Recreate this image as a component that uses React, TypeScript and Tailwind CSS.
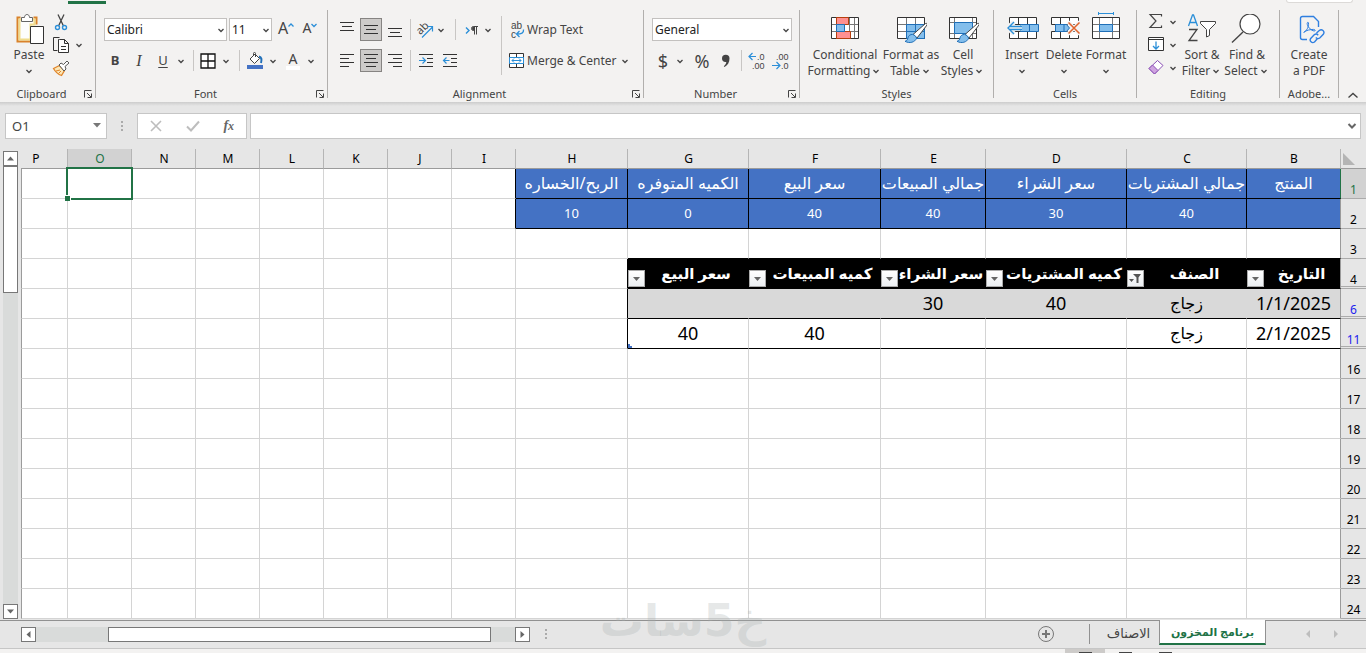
import type { ReactNode } from 'react';

const COLUMNS = ['P', 'O', 'N', 'M', 'L', 'K', 'J', 'I', 'H', 'G', 'F', 'E', 'D', 'C', 'B'];
const ROWS = [1, 2, 3, 4, 6, 11, 16, 17, 18, 19, 20, 21, 22, 23, 24];

const CELLS: Record<string, string> = {
  H1: 'الربح/الخساره', G1: 'الكميه المتوفره', F1: 'سعر البيع', E1: 'جمالي المبيعات',
  D1: 'سعر الشراء', C1: 'جمالي المشتريات', B1: 'المنتج',
  H2: '10', G2: '0', F2: '40', E2: '40', D2: '30', C2: '40',
  G4: 'سعر البيع', F4: 'كميه المبيعات', E4: 'سعر الشراء', D4: 'كميه المشتريات', C4: 'الصنف', B4: 'التاريخ',
  E6: '30', D6: '40', C6: 'زجاج', B6: '1/1/2025',
  G11: '40', F11: '40', C11: 'زجاج', B11: '2/1/2025',
};

/* ---------- small pieces ---------- */

const Chevron = () => (
  <svg width="12" height="12" viewBox="0 0 12 12" fill="none" stroke="#444" strokeWidth="1.300" className="shrink-0">
    <path d="M3.5 5 6 7.5 8.5 5" />
  </svg>
);

const Sep = ({ className = 'h-[21px]' }: { className?: string }) => (
  <span className={`w-px shrink-0 bg-[#c8c6c4] ${className}`} />
);

const Tool = ({ label, children, active, className = 'w-[22px]' }: { label: string; children: ReactNode; active?: boolean; className?: string }) => (
  <button
    aria-label={label}
    className={`flex h-[23px] shrink-0 items-center justify-center ${className} ${active ? 'border border-[#868482] bg-[#cdcbc9]' : ''}`}
  >
    {children}
  </button>
);

const BigTool = ({ lines, icon, arrow, className }: { lines: string[]; icon: ReactNode; arrow?: boolean; className: string }) => (
  <button className={`flex shrink-0 flex-col items-center pt-1 ${className}`}>
    <svg width="32" height="33" viewBox="0 0 32 33" fill="none" className="shrink-0">{icon}</svg>
    <span className="h-4 whitespace-nowrap leading-4">{lines[0]}</span>
    <span className="flex h-4 items-center whitespace-nowrap leading-4">
      {lines[1]}
      {arrow && <Chevron />}
    </span>
  </button>
);

const Group = ({ title, launcher, className, children }: { title: string; launcher?: boolean; className: string; children: ReactNode }) => (
  <>
    <section className={`flex h-[92px] shrink-0 flex-col ${className}`}>
      <div className="flex h-[76px]">{children}</div>
      <div className="flex h-4 items-center text-[11px] leading-4">
        <span className="flex-1 text-center">{title}</span>
        {launcher && (
          <button aria-label={`${title} settings`} className="mr-[2px]">
            <svg width="10" height="10" viewBox="0 0 10 10" fill="none" stroke="#444">
              <path d="M1.5 8.5v-7h7M4 4l4 4M8.5 4.5v4h-4" />
            </svg>
          </button>
        )}
      </div>
    </section>
    <span className="h-[88px] w-px shrink-0 bg-[#b1afad]" />
  </>
);

const Combo = ({ label, value, className }: { label: string; value: string; className: string }) => (
  <span className={`relative block h-[23px] shrink-0 ${className}`}>
    <select aria-label={label} className="size-full appearance-none border border-[#c3c1bf] bg-white pl-[2px] text-xs text-[#222]">
      <option>{value}</option>
    </select>
    <span className="pointer-events-none absolute top-[6px] right-0">
      <Chevron />
    </span>
  </span>
);

/* ---------- ribbon drawings ---------- */

const Lines = ({ d }: { d: string }) => (
  <svg width="16" height="16" viewBox="0 0 16 16" fill="none" stroke="#333" className="shrink-0">
    <path d={d} />
  </svg>
);

const Brush = () => (
  <g>
    <path d="M30.5 9.5c1.500-.5 2 .5 1.500 1.500L22 24l-4-3.500z" fill="#fff" stroke="#444" />
    <path d="M17.500 20.500c2 .3 3.800 1.800 4 3.800-1.500 4-7 5.500-11.500 3 2-.5 2.500-1.500 3-3.500.5-2.300 2.500-3.500 4.500-3.300z" fill="#83beec" stroke="#1f6fb8" />
  </g>
);

const pasteIcon = (
  <>
    <path d="M6.500 3.500h-3v24h14M19.500 3.500h3v7" stroke="#d9822b" strokeWidth="2" />
    <path d="M5.500 5.500v20h11v-15h4v-5z" fill="#fdfdfd" stroke="#f0dc8c" strokeWidth="2" />
    <path d="M7.500 7.500v-4h3c0-4 5-4 5 0h3v4z" fill="#fff" stroke="#666" />
    <path d="M16.500 12.500h13v17h-13z" fill="#fff" stroke="#333" />
  </>
);

const conditionalIcon = (
  <>
    <path d="M2.500 3.500h27v21h-27z" fill="#fff" />
    <path d="M2.500 10.500h27M2.500 17.500h27M7.500 3.500v21M20.500 3.500v21M25.500 3.500v21" stroke="#777" />
    <path d="M2.500 3.500h27v21h-27z" stroke="#333" />
    <path d="M7.500 3.500h12v7h-12zM7.500 17.500h14v7h-14z" fill="#ff9090" stroke="#b5400e" />
    <path d="M7.500 10.500h8v7h-8z" fill="#83beec" stroke="#1f6fb8" />
  </>
);

const formatTableIcon = (
  <>
    <path d="M2.500 3.500h27v21h-27z" fill="#fff" />
    <path d="M11.500 10.500h18v14h-18z" fill="#83beec" />
    <path d="M2.500 10.500h27M2.500 17.500h9M11.500 3.500v7M20.500 3.500v7" stroke="#777" />
    <path d="M2.500 3.500h27v21h-27z" stroke="#333" />
    <path d="M11.500 10.500h18v14h-18zM11.500 17.500h18M20.500 10.500v14" stroke="#1f6fb8" />
    <Brush />
  </>
);

const cellStylesIcon = (
  <>
    <path d="M2.500 3.500h27v21h-27z" fill="#fff" />
    <path d="M2.500 8.500h27M2.500 19.500h27M7.500 3.500v21M25.500 3.500v21" stroke="#777" />
    <path d="M2.500 3.500h27v21h-27z" stroke="#333" />
    <path d="M7.500 8.500h18v11h-18z" fill="#83beec" stroke="#1f6fb8" />
    <Brush />
  </>
);

const insertIcon = (
  <>
    <path d="M3.500 3.500h27v7h-27zM3.500 17.500h27v7h-27z" fill="#fff" stroke="#333" />
    <path d="M12.500 3.500v7M21.500 3.500v7M12.500 17.500v7M21.500 17.500v7" stroke="#333" />
    <path d="M14.500 10.500h18v7h-18zM23.500 10.500v7" fill="#83beec" stroke="#1f6fb8" />
    <path d="M8 8 2 14l6 6M3 14h13" stroke="#f3f2f1" strokeWidth="5" />
    <path d="M8 8 2 14l6 6M4 12.500h12M4 15.500h12" stroke="#2b8fd8" strokeWidth="1.400" />
  </>
);

const deleteIcon = (
  <>
    <path d="M3.500 3.500h27v7h-27zM3.500 17.500h27v7h-27z" fill="#fff" stroke="#333" />
    <path d="M12.500 3.500v7M21.500 3.500v7M12.500 17.500v7M21.500 17.500v7" stroke="#333" />
    <path d="M7.500 10.500h11l3 3.500-3 3.500h-11zM16 10.500v7" fill="#83beec" stroke="#1f6fb8" />
    <path d="m20 8 12 12M32 8 20 20" stroke="#f3f2f1" strokeWidth="4" />
    <path d="m20.500 8.500 11 11M31.500 8.500l-11 11" stroke="#e0632b" strokeWidth="1.500" />
  </>
);

const formatIcon = (
  <>
    <path d="M2.500 3.500h27v21h-27z" fill="#fff" />
    <path d="M2.500 10.500h27M2.500 17.500h27M9.500 3.500v21M22.500 3.500v21" stroke="#777" />
    <path d="M2.500 3.500h27v21h-27z" stroke="#333" />
    <path d="M9.500 10.500h13v7h-13z" fill="#83beec" stroke="#1f6fb8" />
    <path d="M8.500-2v3M23.500-2v3M8.500-.5h15" stroke="#2b8fd8" />
  </>
);

const sortFilterIcon = (
  <>
    <path d="m2.500 12 4-11h1l4 11M4 8.500h6" stroke="#2b8fd8" strokeWidth="1.300" />
    <path d="M3 15.500h8l-8 11h8.500" stroke="#444" strokeWidth="1.300" />
    <path d="M14.500 7.500h15v2l-6 6v6l-3 1.500v-7.500l-6-6z" fill="#fff" stroke="#444" />
  </>
);

const findIcon = (
  <>
    <circle cx="19" cy="10" r="10" fill="#fff" stroke="#444" strokeWidth="1.200" />
    <path d="M12 18 1 28.500" stroke="#444" strokeWidth="1.400" />
  </>
);

const pdfIcon = (
  <g stroke="#2f7fe0" strokeWidth="1.400">
    <path d="M14 25.500H9.500a2 2 0 0 1-2-2v-19a2 2 0 0 1 2-2h11l5 5V13" />
    <path d="M10.500 18.500c3-1 5.500-6 5-9.500-.3-1.500-1.800-.5-1.200 1.500.9 3 3.700 6 6.700 6.500 2 0 1.500-1.500-.5-1.600-3.500 0-7 1-9.500 2.600" strokeWidth="1" />
    <path d="m23.500 19 2.800-2.500c2.500-2 6 1 4 3.800l-3.300 3.500c-1.500 1.200-3.200.8-4.200-.3M24.500 24.500 21.500 28c-2.500 1.800-5.500-1.200-3.800-3.500l3.500-3.700c1.300-1 3-.8 4 .4" />
  </g>
);

/* ---------- ribbon ---------- */

const Ribbon = () => (
  <header className="shrink-0 bg-[#f3f2f1] text-xs text-[#444]">
    <div className="flex h-[10px] items-start">
      <span className="mt-px ml-[68px] h-[3px] w-[38px] bg-[#217346]" />
      <span className="mr-[13px] ml-auto h-[3px] w-[67px] rounded-b border border-t-0 border-[#dcdad8] bg-white" />
    </div>
    <div className="flex">
      <Group title="Clipboard" launcher className="w-[95px]">
        <div className="flex gap-1 pl-[11px]">
          <button className="flex w-9 flex-col items-center pt-1">
            <svg width="32" height="33" viewBox="-1 0 32 33" fill="none">{pasteIcon}</svg>
            <span className="leading-4">Paste</span>
            <span className="flex h-4 items-center"><Chevron /></span>
          </button>
          <div className="flex flex-col">
            <Tool label="Cut" className="w-5">
              <svg width="16" height="18" viewBox="0 0 16 18" fill="none">
                <path d="M5 1.500 10.500 13M11 1.500 5.500 13" stroke="#444" strokeWidth="1.300" />
                <circle cx="4.500" cy="14.500" r="2" stroke="#2b8fd8" strokeWidth="1.400" />
                <circle cx="11.500" cy="14.500" r="2" stroke="#2b8fd8" strokeWidth="1.400" />
              </svg>
            </Tool>
            <div className="flex items-center gap-0.5">
              <Tool label="Copy" className="w-5">
                <svg width="18" height="18" viewBox="0 0 18 18" fill="none" stroke="#333">
                  <path d="M7.500 1.500h-6v13h4" />
                  <path d="M7.500 3.500h5l4 4v9h-10v-13zM12.500 3.500v4h4M9 10.500h5M9 13.500h5" fill="#fff" />
                </svg>
              </Tool>
              <Chevron />
            </div>
            <Tool label="Format Painter" className="w-5">
              <svg width="18" height="18" viewBox="0 0 18 18" fill="none">
                <path d="m1.500 9.500 6-3 5 5-3 5c-3-1-6-3.500-8-7z" fill="#fbe7b8" stroke="#e0862b" strokeWidth="1.300" />
                <path d="m4 12 4-1M6.500 14.500 9 12" stroke="#e0862b" />
                <path d="m7 6 2-2 2.500 1.500L15 2l2 2-4 3.500L14 10l-2 2z" fill="#fff" stroke="#555" />
              </svg>
            </Tool>
          </div>
        </div>
      </Group>

      <Group title="Font" launcher className="w-[231px]">
        <div className="flex flex-col gap-2 pt-2">
          <div className="flex items-center pl-2">
            <Combo label="Font" value="Calibri" className="w-[123px]" />
            <Combo label="Font size" value="11" className="ml-[2px] w-[43px]" />
            <Tool label="Increase font size" className="ml-1 w-5 pb-1">
              <span className="text-base">A</span>
              <svg width="6" height="12" viewBox="0 0 6 12" fill="none" stroke="#2b8fd8" strokeWidth="1.300"><path d="M.5 4.500 3 2l2.500 2.500" /></svg>
            </Tool>
            <Tool label="Decrease font size" className="ml-1 w-5 pb-1">
              <span className="text-sm">A</span>
              <svg width="6" height="12" viewBox="0 0 6 12" fill="none" stroke="#2b8fd8" strokeWidth="1.300"><path d="M.5 2 3 4.500 5.500 2" /></svg>
            </Tool>
          </div>
          <div className="flex items-center pl-[7px]">
            <Tool label="Bold" className="w-6"><b className="text-[13px]">B</b></Tool>
            <Tool label="Italic" className="w-6"><i className="font-['Liberation_Serif',serif] text-base">I</i></Tool>
            <Tool label="Underline" className="w-6"><span className="text-[13px] underline underline-offset-2">U</span></Tool>
            <Chevron />
            <Sep className="mx-[6px] h-[21px]" />
            <Tool label="Borders" className="w-4">
              <svg width="16" height="16" viewBox="0 0 16 16" fill="#fff" stroke="#111" strokeWidth="1.300"><path d="M1 1h14v14H1zM8 1v14M1 8h14" /></svg>
            </Tool>
            <span className="ml-1"><Chevron /></span>
            <Sep className="mx-[7px] h-[21px]" />
            <Tool label="Fill color" className="w-4">
              <svg width="16" height="17" viewBox="0 0 16 17" fill="none">
                <path d="M0 13h16v4H0z" fill="#4472c4" />
                <path d="m3 7 5-5 4.500 4.500-5 5zM6.500 4V1.500c0-1.500 2-1.500 2 0V5" fill="#fff" stroke="#444" />
                <path d="M12 4.500c2.500.5 3 3 2 6.500" stroke="#1f6fb8" strokeWidth="2" />
              </svg>
            </Tool>
            <span className="ml-1"><Chevron /></span>
            <Tool label="Font color" className="ml-[6px] w-4">
              <span className="border-b-4 border-white px-[3px] text-sm leading-[15px]">A</span>
            </Tool>
            <span className="ml-1"><Chevron /></span>
          </div>
        </div>
      </Group>

      <Group title="Alignment" launcher className="w-[315px]">
        <div className="flex flex-col gap-2 pt-2 pl-2">
          <div className="flex items-center">
            <Tool label="Top align"><Lines d="M1 .5h14M3 4.500h10M1 8.500h14" /></Tool>
            <Tool label="Middle align" active className="mx-[2px] w-[22px]"><Lines d="M1 3.500h14M3 7.500h10M1 11.500h14" /></Tool>
            <Tool label="Bottom align"><Lines d="M1 6.500h14M3 10.500h10M1 14.500h14" /></Tool>
            <Sep className="mr-[6px] ml-1 h-[21px]" />
            <Tool label="Orientation" className="w-4">
              <svg width="18" height="18" viewBox="0 0 18 18" fill="none" className="shrink-0 overflow-visible">
                <text x="0" y="12" transform="rotate(-45 5 8)" fontSize="11" fill="#444">ab</text>
                <path d="M6 16.500 16.500 6M11.500 5.500h5v5" stroke="#2b8fd8" strokeWidth="1.200" />
              </svg>
            </Tool>
            <span className="ml-[2px]"><Chevron /></span>
            <Sep className="mx-2 h-[21px]" />
            <Tool label="Text direction" className="w-4">
              <svg width="14" height="14" viewBox="0 0 14 14" fill="none">
                <path d="m1 4.500 3 3-3 3" stroke="#2b8fd8" strokeWidth="1.400" />
                <path d="M9.500 11.500v-8M11.500 11.500v-8M13 3.500H8.500a2 2 0 0 0 0 4h1" stroke="#444" />
                <path d="M9 3.500a2 2 0 0 0 0 4z" fill="#444" />
              </svg>
            </Tool>
            <span className="ml-[2px]"><Chevron /></span>
          </div>
          <div className="flex items-center">
            <Tool label="Align left"><Lines d="M1 1.500h14M1 5.500h9M1 9.500h14M1 13.500h9" /></Tool>
            <Tool label="Center" active className="mx-[2px] w-[22px]"><Lines d="M1 1.500h14M3 5.500h10M1 9.500h14M3 13.500h10" /></Tool>
            <Tool label="Align right"><Lines d="M1 1.500h14M6 5.500h9M1 9.500h14M6 13.500h9" /></Tool>
            <Sep className="mr-[4px] ml-1 h-[21px]" />
            <Tool label="Increase indent">
              <svg width="16" height="16" viewBox="0 0 16 16" fill="none">
                <path d="M1 1.500h14M9 5.500h6M9 9.500h6M1 13.500h14" stroke="#333" />
                <path d="M1 7.500h6M4.500 4.500l3 3-3 3" stroke="#2b8fd8" strokeWidth="1.200" />
              </svg>
            </Tool>
            <Tool label="Decrease indent" className="ml-[2px] w-[22px]">
              <svg width="16" height="16" viewBox="0 0 16 16" fill="none">
                <path d="M1 1.500h14M9 5.500h6M9 9.500h6M1 13.500h14" stroke="#333" />
                <path d="M1.500 7.500h6M4.500 4.500l-3 3 3 3" stroke="#2b8fd8" strokeWidth="1.200" />
              </svg>
            </Tool>
          </div>
        </div>
        <Sep className="mt-[6px] ml-[7px] h-[59px]" />
        <div className="flex flex-col gap-2 pt-2 pl-[7px]">
          <button className="flex h-[23px] items-center gap-[2px]">
            <svg width="16" height="18" viewBox="0 0 16 18" fill="none" className="overflow-visible font-['Liberation_Sans',sans-serif]">
              <text x="2" y="8" fontSize="10" fill="#444">ab</text>
              <text x="2" y="17" fontSize="10" fill="#444">c</text>
              <path d="M14.500 8.500c.5 3.500-2 4.500-7 4.500M10.500 10l-3 3 3 3" stroke="#2b8fd8" strokeWidth="1.300" />
            </svg>
            Wrap Text
          </button>
          <button className="flex h-[23px] items-center gap-[2px]">
            <svg width="16" height="16" viewBox="0 0 16 16" fill="#fff" stroke="#333">
              <path d="M.5.500h14v14H.5zM7.500 1v3M7.500 11v3" />
              <path d="M.5 4.500h14v6H.5zM3 7.500h9M5 5.500l-2 2 2 2M10 5.500l2 2-2 2" stroke="#2b8fd8" />
            </svg>
            Merge &amp; Center
            <Chevron />
          </button>
        </div>
      </Group>

      <Group title="Number" launcher className="w-[155px]">
        <div className="flex flex-col gap-2 pt-2 pl-2">
          <Combo label="Number format" value="General" className="w-[140px]" />
          <div className="flex items-center">
            <Tool label="Currency"><span className="text-lg">$</span></Tool>
            <Chevron />
            <Tool label="Percent" className="ml-1 w-6"><span className="text-lg">%</span></Tool>
            <Tool label="Comma style" className="w-6">
              <svg width="10" height="14" viewBox="0 0 10 14" fill="#444"><path d="M1 4.500a3.700 3.700 0 0 1 7.500 0c0 4-2 7-5 8.500l-.7-.8c1.500-1 2.400-2.500 2.500-4.200C2.800 8.500 1 6.800 1 4.500z" /></svg>
            </Tool>
            <Sep className="mr-[6px] ml-[3px] h-[21px]" />
            <Tool label="Increase decimal" className="w-[18px]">
              <svg width="18" height="18" viewBox="0 0 18 18" fill="none" className="shrink-0 overflow-visible font-['Liberation_Sans',sans-serif]">
                <path d="M1 4.500h7M4.500 1 1 4.500 4.500 8" stroke="#2b8fd8" strokeWidth="1.200" />
                <text x="9" y="8" fontSize="9" fill="#444">.0</text>
                <text x="4" y="17" fontSize="9" fill="#444">.00</text>
              </svg>
            </Tool>
            <Tool label="Decrease decimal" className="ml-[6px] w-[18px]">
              <svg width="18" height="18" viewBox="0 0 18 18" fill="none" className="shrink-0 overflow-visible font-['Liberation_Sans',sans-serif]">
                <path d="M0 13.500h8M4.500 10 8 13.500 4.500 17" stroke="#2b8fd8" strokeWidth="1.200" />
                <text x="4" y="8" fontSize="9" fill="#444">.00</text>
                <text x="9" y="17" fontSize="9" fill="#444">.0</text>
              </svg>
            </Tool>
          </div>
        </div>
      </Group>

      <Group title="Styles" className="w-[193px]">
        <div className="flex pl-2">
          <BigTool lines={['Conditional', 'Formatting']} arrow icon={conditionalIcon} className="w-[74px]" />
          <BigTool lines={['Format as', 'Table']} arrow icon={formatTableIcon} className="w-[58px]" />
          <BigTool lines={['Cell', 'Styles']} arrow icon={cellStylesIcon} className="w-[46px]" />
        </div>
      </Group>

      <Group title="Cells" className="w-[142px]">
        <div className="flex pl-[7px] [&_svg]:overflow-visible">
          <BigTool lines={['Insert', '']} arrow icon={insertIcon} className="w-[42px]" />
          <BigTool lines={['Delete', '']} arrow icon={deleteIcon} className="w-[42px]" />
          <BigTool lines={['Format', '']} arrow icon={formatIcon} className="w-[42px]" />
        </div>
      </Group>

      <Group title="Editing" className="w-[142px]">
        <div className="flex pl-[11px]">
          <div className="flex flex-col">
            <div className="flex items-center gap-[3px]">
              <Tool label="AutoSum" className="w-4">
                <svg width="16" height="16" viewBox="0 0 16 16" fill="none" stroke="#444" strokeWidth="1.200"><path d="M13.500 2.500v-2H2l6 6.500-6 6.500h11.500v-2" /></svg>
              </Tool>
              <Chevron />
            </div>
            <div className="flex items-center gap-[3px]">
              <Tool label="Fill" className="w-4">
                <svg width="16" height="16" viewBox="0 0 16 16" fill="none">
                  <path d="M.5.500h15v13H.5zM.5 2.500h15" fill="#fff" stroke="#333" />
                  <path d="M8 4.500v7.500M5 9l3 3 3-3" stroke="#2b8fd8" strokeWidth="1.300" />
                </svg>
              </Tool>
              <Chevron />
            </div>
            <div className="flex items-center gap-[3px]">
              <Tool label="Clear" className="w-4">
                <svg width="16" height="16" viewBox="0 0 16 16" fill="#fff" stroke="#8a4fb5">
                  <path d="m1 8.500 8.500-8L15 5.500 6.500 14z" />
                  <path d="M1 8.500 4.500 5l5.500 5.500L6.500 14z" fill="#cfa4e0" />
                </svg>
              </Tool>
              <Chevron />
            </div>
          </div>
          <BigTool lines={['Sort &', 'Filter']} arrow icon={sortFilterIcon} className="w-[46px]" />
          <BigTool lines={['Find &', 'Select']} arrow icon={findIcon} className="w-[44px]" />
        </div>
      </Group>

      <Group title="Adobe..." className="w-[58px]">
        <BigTool lines={['Create', 'a PDF']} icon={pdfIcon} className="w-[58px]" />
      </Group>

      <button aria-label="Collapse ribbon" className="flex flex-1 items-end justify-center pb-[2px]">
        <svg width="12" height="10" viewBox="0 0 12 10" fill="none" stroke="#444" strokeWidth="1.400"><path d="m1.500 7.500 4.500-4 4.500 4" /></svg>
      </button>
    </div>
  </header>
);

/* ---------- formula bar ---------- */

const FormulaBar = () => (
  <div className="shrink-0">
    <div className="h-1 bg-linear-to-b from-[#cccccc] to-[#e6e6e6]" />
    <div className="flex h-[43px] items-start gap-[3px] pt-[7px] pr-[5px] pl-[5px]">
      <div className="relative">
        <input aria-label="Name Box" defaultValue="O1" className="h-[26px] w-[102px] border border-[#c6c6c6] bg-white px-[6px] text-[13px] text-[#444]" />
        <svg width="8" height="5" viewBox="0 0 8 5" className="absolute top-[10px] right-[6px]"><path d="M0 0h8L4 4.500z" fill="#777" /></svg>
      </div>
      <svg width="24" height="26" viewBox="0 0 24 26" fill="#ababab"><path d="M11 8h2v2h-2zM11 12h2v2h-2zM11 16h2v2h-2z" /></svg>
      <div className="flex h-[26px] w-[110px] items-center justify-around border border-[#c6c6c6] bg-white">
        <button aria-label="Cancel"><svg width="12" height="12" viewBox="0 0 12 12" stroke="#bdbdbd" strokeWidth="1.600"><path d="m1 1 10 10M11 1 1 11" /></svg></button>
        <button aria-label="Enter"><svg width="14" height="12" viewBox="0 0 14 12" fill="none" stroke="#bdbdbd" strokeWidth="2"><path d="m1 6.500 4 4L13 1.500" /></svg></button>
        <button aria-label="Insert function" className="font-['Liberation_Serif',serif] text-sm font-bold text-[#666] italic leading-5">
          f<span className="text-xs">x</span>
        </button>
      </div>
      <div className="relative flex-1">
        <input aria-label="Formula" className="block h-[26px] w-full border border-[#c6c6c6] bg-white px-2 text-xs" />
        <svg width="10" height="7" viewBox="0 0 10 7" fill="none" stroke="#666" strokeWidth="2" className="absolute top-[10px] right-[4px]"><path d="m1.500 1 3.500 3.500L8.500 1" /></svg>
      </div>
    </div>
  </div>
);

/* ---------- sheet ---------- */

const Arrow = ({ d, label }: { d: string; label: string }) => (
  <button aria-label={label} className="flex size-[15px] shrink-0 items-center justify-center border border-[#777] bg-white">
    <svg width="7" height="7" viewBox="0 0 7 7" fill="#666"><path d={d} /></svg>
  </button>
);

const FilterButton = ({ filtered }: { filtered?: boolean }) => (
  <button aria-label="Filter" className="absolute bottom-px left-0 flex size-[17px] items-center justify-center border border-[#ababab] bg-linear-to-b from-white to-[#eceff2]">
    {filtered ? (
      <svg width="13" height="11" viewBox="0 0 13 11" fill="#555"><path d="M4 1h8L9.500 4.500V10h-2V4.500zM0 6h5L2.500 9z" /></svg>
    ) : (
      <svg width="7" height="4" viewBox="0 0 7 4" fill="#666"><path d="M0 0h7L3.500 4z" /></svg>
    )}
  </button>
);

const cellClass = (col: string, row: number) => {
  const summary = col >= 'B' && col <= 'H';
  const table = col >= 'B' && col <= 'G';

  let fill = 'bg-white';
  let right = 'border-r-[#d4d4d4]';
  let bottom = 'border-b-[#d4d4d4]';
  let text = col === 'C' ? 'text-base text-black' : 'text-lg text-black';

  if (row <= 2) {
    if (summary) {
      fill = 'bg-[#4472c4]';
      bottom = 'border-b-black';
      text = row === 1 ? 'text-base text-white' : 'text-[13px] text-white';
    }
    if (summary || col === 'I') right = 'border-r-black';
  }
  if (row === 3 && table) bottom = 'border-b-black';
  if (row === 4 && table) {
    fill = 'bg-black';
    right = 'border-r-black';
    bottom = 'border-b-black';
    text = 'pl-4 text-[15px] font-semibold text-white';
  }
  if (row === 6 && table) {
    fill = 'bg-[#d9d9d9]';
    right = 'border-r-[#d9d9d9]';
  }
  if ((row === 6 || row === 11) && table) bottom = 'border-b-black';
  if (col === 'H' && (row === 4 || row === 6 || row === 11)) right = 'border-r-black';
  if (col === 'B') right = 'border-r-[#9b9b9b]';
  if (col === 'B' && row === 1) right = 'border-r-[#217346]';

  return `${fill} ${right} ${bottom} ${text}`;
};

// rows next to a hidden range get a double divider in the row header
const beforeHidden = (row: number) => row === 4 || row === 6 || row === 11;

const Sheet = () => (
  <div className="flex shrink-0">
    <div className="flex w-[21px] shrink-0 flex-col pt-[2px] pl-[3px]">
      <Arrow label="Scroll up" d="M0 5.500h7l-3.500-4z" />
      <span className="h-[127px] w-[15px] border border-[#777] bg-white" />
      <span className="w-[15px] flex-1 bg-[#d9dbda]" />
      <Arrow label="Scroll down" d="M0 1.500h7l-3.500 4z" />
    </div>
    <table className="w-full flex-1 table-fixed border-separate border-spacing-0">
      <colgroup>
        <col />
        <col className="w-16" /><col className="w-16" /><col className="w-16" /><col className="w-16" />
        <col className="w-16" /><col className="w-16" /><col className="w-16" />
        <col className="w-[112px]" />
        <col className="w-[121px]" />
        <col className="w-[132px]" />
        <col className="w-[105px]" />
        <col className="w-[141px]" />
        <col className="w-[120px]" />
        <col className="w-[94px]" />
        <col className="w-[25px]" />
      </colgroup>
      <thead>
        <tr className="h-5">
          {COLUMNS.map((col) => (
            <th
              key={col}
              scope="col"
              className={`h-5 border-r border-b border-r-[#b5b5b5] border-b-[#9b9b9b] p-0 text-xs leading-[19px] font-normal ${
                col === 'O' ? 'bg-[#d2d2d2] text-[#217346]' : 'text-black'
              } ${col === 'P' ? 'pr-4' : 'pl-px'}`}
            >
              {col}
            </th>
          ))}
          <th className="border-b border-b-[#9b9b9b] p-0">
            <svg width="14" height="12" viewBox="0 0 14 12" className="ml-[2px]"><path d="M0 0v12h12z" fill="#b4b4b4" /></svg>
          </th>
        </tr>
      </thead>
      <tbody>
        {ROWS.map((row) => (
          <tr key={row} className="h-[30px]">
            {COLUMNS.map((col) => (
              <td
                key={col}
                className={`relative h-[30px] border-r border-b p-0 text-center leading-[29px] ${col === 'P' ? 'border-l border-l-[#9b9b9b]' : ''} ${cellClass(col, row)}`}
              >
                <div dir="auto" className="flex h-[29px] items-center justify-center overflow-hidden whitespace-nowrap">
                  {CELLS[col + row]}
                </div>
                {row === 4 && col >= 'B' && col <= 'G' && <FilterButton filtered={col === 'C'} />}
                {row === 11 && col === 'G' && (
                  <svg width="4" height="4" viewBox="0 0 4 4" fill="#4472c4" className="absolute bottom-0 left-0"><path d="M0 0h2v2h2v2H0z" /></svg>
                )}
                {row === 1 && col === 'O' && (
                  <span className="pointer-events-none absolute -inset-[2px] z-10 border-2 border-[#217346]">
                    <span className="absolute -bottom-[3px] -left-[3px] size-[6px] border-t border-r border-white bg-[#217346]" />
                  </span>
                )}
              </td>
            ))}
            <th
              scope="row"
              className={`border-b border-[#ababab] p-0 text-center align-bottom text-xs leading-4 font-normal ${
                row === 1 ? 'bg-[#d2d2d2] text-[#217346]' : row === 6 || row === 11 ? 'text-[#2222ee]' : 'text-black'
              }`}
            >
              {beforeHidden(row) ? <span className="mb-px block h-[15px] border-b border-[#ababab]">{row}</span> : row}
            </th>
          </tr>
        ))}
      </tbody>
    </table>
  </div>
);

const SheetTabs = () => (
  <div className="relative mt-px flex h-[29px] shrink-0 border-t border-b border-t-[#919191] border-b-[#c6c6c6]">
    <div className="ml-[21px] flex h-[15px] w-[509px] shrink-0 self-center">
      <Arrow label="Scroll left" d="M5.500 0v7l-4-3.500z" />
      <span className="w-[72px] bg-[#d9dbda]" />
      <span className="w-[383px] border border-[#777] bg-white" />
      <span className="flex-1 bg-[#d9dbda]" />
      <Arrow label="Scroll right" d="M1.500 0v7l4-3.500z" />
    </div>
    <svg width="32" height="26" viewBox="0 0 32 26" fill="#ababab"><path d="M15 8h2v2h-2zM15 12h2v2h-2zM15 16h2v2h-2z" /></svg>
    <div className="ml-auto flex items-start text-[13px]">
      <button aria-label="New sheet" className="mt-[5px] mr-[35px]">
        <svg width="16" height="16" viewBox="0 0 16 16" fill="none" stroke="#777"><circle cx="8" cy="8" r="7.500" /><path d="M4 8h8M8 4v8" strokeWidth="2" /></svg>
      </button>
      <span className="mt-[3px] h-5 w-px bg-[#919191]" />
      <button className="h-6 w-[69px] pt-px pl-2 text-[#444]">الاصناف</button>
      <button className="relative -mt-px h-[25px] w-[107px] border-x border-b-2 border-x-[#919191] border-b-[#217346] bg-white pt-[2px] text-[11px] font-semibold text-[#217346]">
        برنامج المخزون
      </button>
      <div className="flex w-[100px] items-center justify-end gap-[22px] pt-[9px] pr-[27px]">
        <svg width="6" height="8" viewBox="0 0 6 8" fill="#bdbdbd"><path d="M5 0v8L1 4z" /></svg>
        <svg width="6" height="8" viewBox="0 0 6 8" fill="#bdbdbd"><path d="M1 0v8l4-4z" /></svg>
      </div>
    </div>
    <span dir="rtl" className="pointer-events-none absolute -top-[26px] left-1/2 -translate-x-1/2 font-['DejaVu_Sans',sans-serif] text-[44px] leading-[52px] font-bold whitespace-nowrap text-[#a8b0ae]/30">
      خ5سات
    </span>
  </div>
);

const StatusBar = () => (
  <footer className="flex h-[22px] shrink-0 justify-end bg-[#f3f2f1] pr-[181px]">
    <button aria-label="Normal view" className="flex w-10 justify-center bg-[#cdcbc9] pt-[3px]"><span className="h-3 w-[13px] border border-[#444]" /></button>
    <button aria-label="Page layout" className="flex w-10 justify-center pt-[3px]"><span className="h-3 w-[13px] border border-[#444]" /></button>
    <button aria-label="Page break preview" className="flex w-10 justify-center pt-[3px]"><span className="h-3 w-[13px] border border-[#444]" /></button>
  </footer>
);

export default function App() {
  return (
    <div className="flex h-screen flex-col overflow-hidden bg-[#e6e6e6] font-['Noto_Sans','DejaVu_Sans',sans-serif]">
      <Ribbon />
      <FormulaBar />
      <Sheet />
      <SheetTabs />
      <StatusBar />
    </div>
  );
}
